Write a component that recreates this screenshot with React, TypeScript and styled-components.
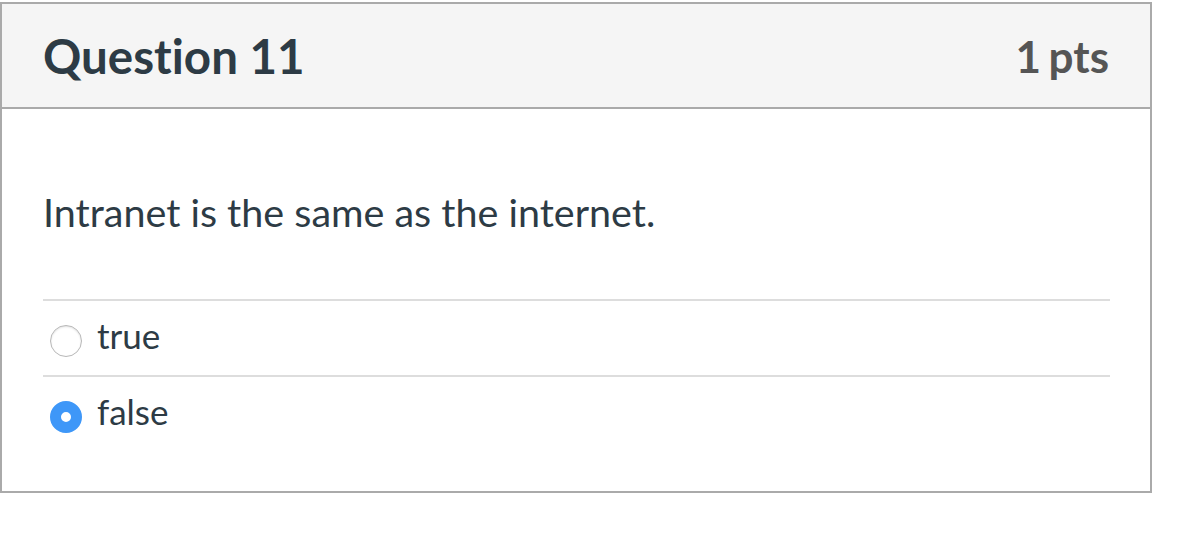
import styled, { createGlobalStyle } from 'styled-components';

const GlobalStyle = createGlobalStyle`
  body {
    margin: 0;
    background: #fff;
    font-family: Lato, "Open Sans", sans-serif;
    font-variant-ligatures: none;
  }
`;

const Card = styled.div`
  margin-top: 2px;
  width: 1152px;
  box-sizing: border-box;
  border: 2px solid #aaa;
  background: #fff;
`;

const Header = styled.div`
  display: flex;
  align-items: center;
  justify-content: space-between;
  height: 103px;
  padding: 0 41px 0 41px;
  background: #f5f5f5;
  border-bottom: 2px solid #aaa;
`;

const Title = styled.h2`
  margin: 0;
  font-size: 47.5px;
  font-weight: 700;
  color: #2d3b45;
`;

const Points = styled.div`
  font-size: 44px;
  font-weight: 700;
  word-spacing: -3px;
  color: #555;
`;

const Body = styled.div`
  padding: 77px 40px 40px 41px;
`;

const QuestionText = styled.p`
  margin: 0 0 61px;
  font-size: 39.5px;
  line-height: 52px;
  color: #2d3b45;
`;

const AnswerList = styled.div`
  display: flex;
  flex-direction: column;
`;

const Answer = styled.label`
  display: flex;
  align-items: center;
  gap: 15px;
  height: 74px;
  padding-left: 7px;
  border-top: 2px solid #ddd;
  font-size: 35px;
  color: #2d3b45;
`;

const AnswerText = styled.span`
  margin-top: -6px;
`;

const Radio = styled.span<{ $checked?: boolean }>`
  box-sizing: border-box;
  width: 32px;
  height: 32px;
  border-radius: 50%;
  flex: none;
  background: #fff;
  border: ${(p) => (p.$checked ? '11px solid #3e97f8' : '1.5px solid #b8b8b8')};
  box-shadow: ${(p) => (p.$checked ? 'none' : 'inset 0 1px 2px rgba(0,0,0,0.12)')};
  margin-top: 6px;
`;

const answers = [
  { label: 'true', checked: false },
  { label: 'false', checked: true },
];

export default function App() {
  return (
    <>
      <GlobalStyle />
      <Card>
        <Header>
          <Title>Question 11</Title>
          <Points>1 pts</Points>
        </Header>
        <Body>
          <QuestionText>Intranet is the same as the internet.</QuestionText>
          <AnswerList>
            {answers.map((a) => (
              <Answer key={a.label}>
                <Radio $checked={a.checked} />
                <AnswerText>{a.label}</AnswerText>
              </Answer>
            ))}
          </AnswerList>
        </Body>
      </Card>
    </>
  );
}
